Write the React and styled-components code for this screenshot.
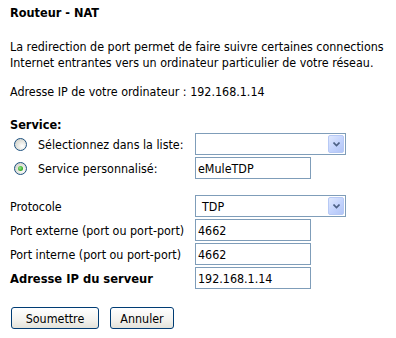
import React from "react";
import styled, { createGlobalStyle } from "styled-components";

const FONT = `"DejaVu Sans Condensed", "DejaVu Sans", sans-serif`;

const Global = createGlobalStyle`
  html, body { margin: 0; padding: 0; background: #fff; }
  body { font-family: ${FONT}; font-size: 12.4px; color: #000; }
`;

const Page = styled.div`
  padding: 5px 10px 0 10px;
  width: 396px;
  box-sizing: border-box;
`;

const Title = styled.div`
  font-weight: bold;
  font-size: 12.6px;
  line-height: 16px;
`;

const Para = styled.p`
  margin: 18px 0 0 0;
  line-height: 16px;
  white-space: nowrap;
`;

const Info = styled.div`
  margin-top: 13px;
  line-height: 16px;
`;

const SectionTitle = styled.div`
  margin-top: 18px;
  font-weight: bold;
  font-size: 12.6px;
  line-height: 14px;
`;

const Form = styled.div`
  display: grid;
  grid-template-columns: 185px auto;
  row-gap: 2px;
  align-items: center;
  margin-top: ${(p) => p.$mt || 0}px;
`;

const Label = styled.label`
  display: flex;
  align-items: center;
  height: 22px;
  padding-left: ${(p) => (p.$radio ? 4 : 0)}px;
  font-weight: ${(p) => (p.$bold ? "bold" : "normal")};
  font-size: ${(p) => (p.$bold ? "12.8px" : "12.4px")};
  white-space: nowrap;
`;

const Radio = styled.span`
  position: relative;
  width: 13px;
  height: 13px;
  border-radius: 50%;
  border: 1px solid #1c5180;
  box-sizing: border-box;
  background: radial-gradient(circle at 65% 65%, #ffffff 0%, #e6e6e0 45%, #c8c8c0 100%);
  margin-right: 11px;
  flex: none;
  &::after {
    content: "";
    display: ${(p) => (p.$checked ? "block" : "none")};
    position: absolute;
    left: 3px;
    top: 3px;
    width: 5px;
    height: 5px;
    border-radius: 50%;
    background: radial-gradient(circle at 40% 40%, #9be68e 0%, #39b12a 60%, #21871a 100%);
  }
`;

const TextBox = styled.div`
  box-sizing: border-box;
  height: 22px;
  width: 116px;
  border: 1px solid #7f9db9;
  background: #fff;
  padding-left: 2px;
  display: flex;
  align-items: center;
  font-size: 12.4px;
`;

const Select = styled.div`
  box-sizing: border-box;
  height: 22px;
  width: 151px;
  border: 1px solid #7f9db9;
  background: #fff;
  display: flex;
  align-items: stretch;
  padding: 1px;
`;

const SelectText = styled.div`
  flex: 1;
  display: flex;
  align-items: center;
  padding-left: 5px;
  font-size: 12.4px;
`;

const Arrow = styled.div`
  width: 16px;
  border-radius: 2px;
  border: 1px solid #b7c9f5;
  box-sizing: border-box;
  background: linear-gradient(135deg, #dfe8fd 0%, #c3d3fd 55%, #b2c5f6 100%);
  display: flex;
  align-items: center;
  justify-content: center;
`;

const Buttons = styled.div`
  display: flex;
  gap: 11px;
  margin-top: 18px;
  padding-left: 1px;
`;

const Button = styled.button`
  box-sizing: border-box;
  height: 22px;
  width: ${(p) => p.$w}px;
  border: 1px solid #003c74;
  border-radius: 3px;
  background: linear-gradient(180deg, #ffffff 0%, #f3f2ee 60%, #e3e2da 100%);
  font-family: ${FONT};
  font-size: 12.4px;
  color: #000;
  padding: 0;
`;

const Chevron = () => (
  <svg width="7" height="5" viewBox="0 0 7 5">
    <path d="M0.5 0.5 L3.5 3.5 L6.5 0.5" stroke="#4d6185" strokeWidth="1.6" fill="none" />
  </svg>
);

export default function App() {
  return (
    <>
      <Global />
      <Page>
        <Title>Routeur - NAT</Title>
        <Para>
          La redirection de port permet de faire suivre certaines connections
          <br />
          Internet entrantes vers un ordinateur particulier de votre réseau.
        </Para>
        <Info>Adresse IP de votre ordinateur : 192.168.1.14</Info>
        <SectionTitle>Service:</SectionTitle>
        <Form $mt={1}>
          <Label $radio>
            <Radio />
            Sélectionnez dans la liste:
          </Label>
          <Select>
            <SelectText />
            <Arrow>
              <Chevron />
            </Arrow>
          </Select>
          <Label $radio>
            <Radio $checked />
            Service personnalisé:
          </Label>
          <TextBox>eMuleTDP</TextBox>
        </Form>
        <Form $mt={16}>
          <Label>Protocole</Label>
          <Select>
            <SelectText>TDP</SelectText>
            <Arrow>
              <Chevron />
            </Arrow>
          </Select>
          <Label>Port externe (port ou port-port)</Label>
          <TextBox>4662</TextBox>
          <Label>Port interne (port ou port-port)</Label>
          <TextBox>4662</TextBox>
          <Label $bold>Adresse IP du serveur</Label>
          <TextBox>192.168.1.14</TextBox>
        </Form>
        <Buttons>
          <Button $w={88}>Soumettre</Button>
          <Button $w={64}>Annuler</Button>
        </Buttons>
      </Page>
    </>
  );
}
